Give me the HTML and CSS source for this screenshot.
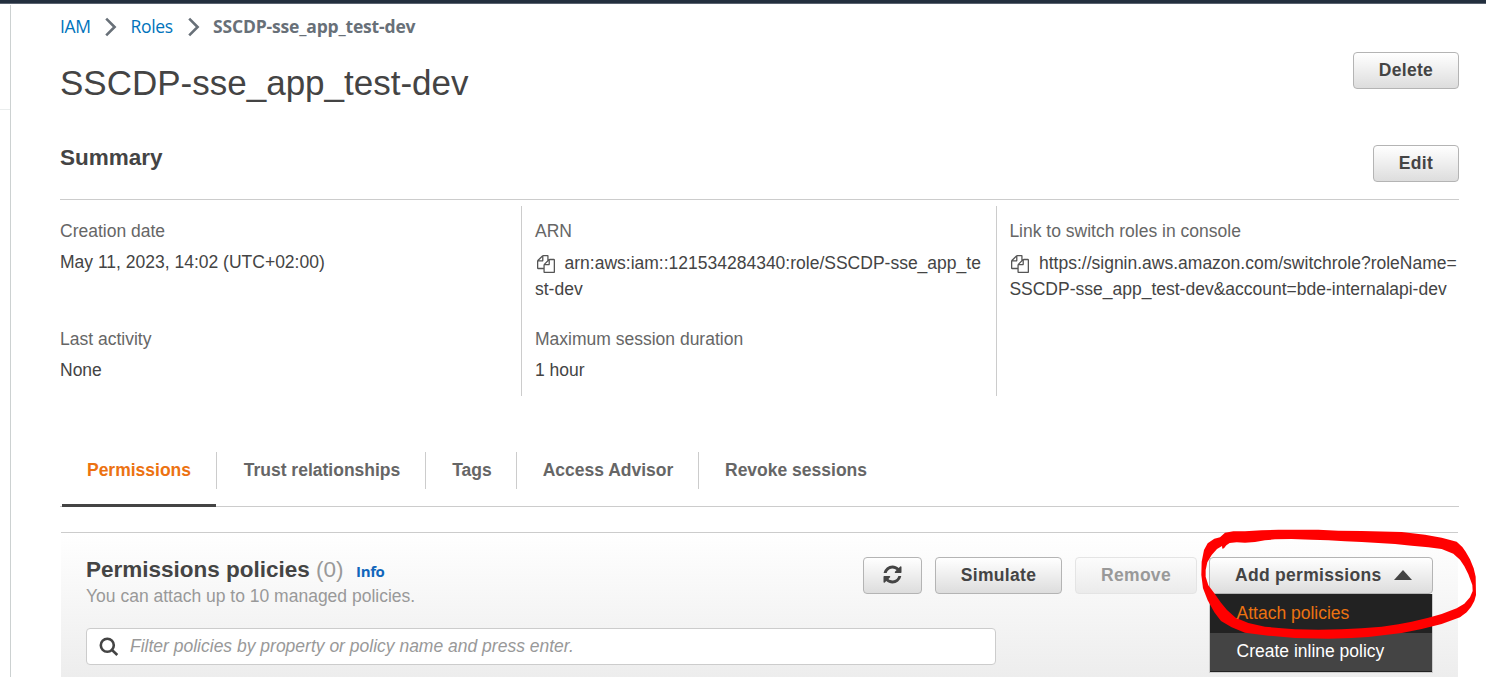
FILE: index.html
```html
<!DOCTYPE html>
<html lang="en">
<head>
<meta charset="utf-8">
<title>SSCDP-sse_app_test-dev</title>
<link rel="stylesheet" href="styles.css">
</head>
<body>
<svg class="defs" width="0" height="0" aria-hidden="true">
  <symbol id="copy" viewBox="0 0 1792 1792"><path d="M1696 384q40 0 68 28t28 68v1216q0 40-28 68t-68 28h-960q-40 0-68-28t-28-68v-288h-544q-40 0-68-28t-28-68v-672q0-40 20-88t48-76l408-408q28-28 76-48t88-20h416q40 0 68 28t28 68v328q68-40 128-40h416zm-544 213l-299 299h299v-299zm-640-384l-299 299h299v-299zm196 647l316-316v-416h-384v416q0 40-28 68t-68 28h-416v640h512v-256q0-40 20-88t48-76zm956 804v-1152h-384v416q0 40-28 68t-68 28h-416v640h896z"/></symbol>
</svg>
<header class="topbar"></header>
<div class="shell">
  <aside class="rail"><div class="rail-rule"></div></aside>
  <main class="content">
    <nav class="crumbs">
      <a>IAM</a>
      <svg class="chev" width="12" height="20" viewBox="0 0 12 20"><path d="M1.2 1.7 9.6 10 1.2 18.3"/></svg>
      <a>Roles</a>
      <svg class="chev" width="12" height="20" viewBox="0 0 12 20"><path d="M1.2 1.7 9.6 10 1.2 18.3"/></svg>
      <b>SSCDP-sse_app_test-dev</b>
    </nav>
    <div class="title-row">
      <h1>SSCDP-sse_app_test-dev</h1>
      <button class="btn delete">Delete</button>
    </div>
    <div class="summary-head">
      <h2>Summary</h2>
      <button class="btn edit">Edit</button>
    </div>
    <section class="summary">
      <div class="col">
        <div class="field"><div class="label">Creation date</div><div class="value">May 11, 2023, 14:02 (UTC+02:00)</div></div>
        <div class="field"><div class="label">Last activity</div><div class="value">None</div></div>
      </div>
      <div class="col">
        <div class="field"><div class="label">ARN</div><div class="value linked"><svg class="copy"><use href="#copy"/></svg>arn:aws:iam::121534284340:role/SSCDP-sse_app_te<br>st-dev</div></div>
        <div class="field"><div class="label">Maximum session duration</div><div class="value">1 hour</div></div>
      </div>
      <div class="col switch">
        <div class="field"><div class="label">Link to switch roles in console</div><div class="value linked"><svg class="copy"><use href="#copy"/></svg>https://signin.aws.amazon.com/switchrole?roleName=<br>SSCDP-sse_app_test-dev&amp;account=bde-internalapi-dev</div></div>
      </div>
    </section>
    <nav class="tabs">
      <a class="tab active">Permissions</a>
      <a class="tab trust">Trust relationships</a>
      <a class="tab tags">Tags</a>
      <a class="tab advisor">Access Advisor</a>
      <a class="tab revoke">Revoke sessions</a>
    </nav>
    <section class="panel">
      <div class="panel-head">
        <div class="heading">
          <h2>Permissions policies <span class="count">(0)</span><a class="info">Info</a></h2>
          <p>You can attach up to 10 managed policies.</p>
        </div>
        <div class="actions">
          <button class="btn refresh" aria-label="Refresh"><svg width="21" height="21" viewBox="0 0 1792 1792"><path d="M1639 1056q0 5-1 7-64 268-268 434.5t-478 166.500q-146 0-282.500-55t-243.500-157l-129 129q-19 19-45 19t-45-19-19-45v-448q0-26 19-45t45-19h448q26 0 45 19t19 45-19 45l-137 137q71 66 161 102t187 36q134 0 250-65t186-179q11-17 53-117 8-23 30-23h192q13 0 22.500 9.500t9.500 22.500zm25-800v448q0 26-19 45t-45 19h-448q-26 0-45-19t-19-45 19-45l138-138q-148-137-349-137-134 0-250 65t-186 179q-11 17-53 117-8 23-30 23h-199q-13 0-22.500-9.500t-9.500-22.500v-7q65-268 270-434.500t480-166.500q146 0 284 55.500t245 156.500l130-129q19-19 45-19t45 19 19 45z"/></svg></button>
          <button class="btn simulate">Simulate</button>
          <button class="btn remove" disabled>Remove</button>
          <div class="dropdown">
            <button class="btn add">Add permissions<svg width="18" height="10" viewBox="0 0 18 10"><path d="M0 10 9 0l9 10z"/></svg></button>
            <div class="menu">
              <a class="item hover"><span>Attach policies</span></a>
              <a class="item"><span>Create inline policy</span></a>
            </div>
            <svg class="marker" width="300" height="157" viewBox="0 0 900 471"><path transform="translate(27 15)" fill-rule="evenodd" d="M90 23L115 19L150 19L200 16L250 14L370 14L430 17L500 18L620 21L690 29L740 38L785 50L802 66L812 80L825 103L836 130L842 155L843 210L838 228L828 246L815 262L795 277L740 297L680 312L620 324L520 336L470 339L400 341L300 339L220 332L150 323L110 307L78 288L58 262L38 226L24 190L19 150L20 110L27 75L38 55L58 41L75 37ZM87 70L82 71L81 63L66 72L50 90L37 112L32 135L32 155L40 181L58 205L78 233L96 255L122 278L160 294L210 305L260 310L300 313L370 314L440 313L500 310L560 305L610 298L650 290L700 278L740 267L785 250L808 236L825 217L833 198L832 180L820 148L808 124L795 104L775 86L740 72L700 67L650 62L600 57L550 54L500 51L450 49L400 46L350 44L290 42L240 43L210 46L180 51L150 53L125 52L104 54L94 61Z"/></svg>
          </div>
        </div>
      </div>
      <div class="search">
        <svg width="20" height="20" viewBox="0 0 20 20"><circle cx="8.300" cy="8.200" r="6.500"/><path d="M13 13l5.300 5"/></svg>
        <span>Filter policies by property or policy name and press enter.</span>
      </div>
    </section>
  </main>
</div>
</body>
</html>
```
FILE: styles.css
```css
* { box-sizing: border-box; }
body {
  margin: 0;
  height: 677px;
  overflow: hidden;
  background: #fff;
  color: #444;
  font: 17.5px/26px "Liberation Sans", Arial, sans-serif;
  white-space: nowrap;
}
.defs { position: absolute; }
h1, h2, p { margin: 0; }
.topbar { height: 4px; background: #232f3e; border-bottom: 1px solid #5a6370; }
.shell { display: flex; height: 673px; }
.rail { width: 11px; margin-top: 1px; border-right: 1px solid #ccd1d1; }
.rail-rule { height: 105px; border-bottom: 1px solid #eaeded; }
.content { width: 1399px; margin-left: 49px; }

.crumbs {
  display: flex;
  align-items: center;
  height: 44px;
  padding-bottom: 1px;
  font: 17.5px/24px "Open Sans", sans-serif;
  color: #687078;
}
.crumbs a { width: 31px; letter-spacing: -0.3px; color: #0073bb; }
.crumbs a + svg + a { width: 43px; }
.crumbs b { font-weight: 700; letter-spacing: -0.17px; }
.chev { margin: 3px 13.500px 0 14px; fill: none; stroke: #687078; stroke-width: 2.6; }

.title-row { display: flex; justify-content: space-between; height: 90px; }
h1 { margin-top: 13px; font-size: 35px; line-height: 44px; font-weight: 400; }
.btn {
  height: 37px;
  padding: 0 0 2px;
  border: 1px solid #b4b4b4;
  border-radius: 4px;
  background: linear-gradient(#fff, #ddd);
  color: #444;
  font: bold 17.5px/26px "Liberation Sans", Arial, sans-serif;
  letter-spacing: 0.3px;
}
.delete { width: 106px; margin-top: 4px; }
.summary-head {
  display: flex;
  justify-content: space-between;
  height: 62px;
  border-bottom: 1px solid #ccc;
}
h2 { font-size: 22.5px; line-height: 30px; }
.summary-head h2 { margin-top: 5px; }
.edit { width: 86px; margin-top: 7px; }

.summary { display: grid; grid-template-columns: 461px 475px 463px; height: 190px; margin-top: 6px; }
.col { height: 190px; padding: 12px 0 0 13px; border-left: 1px solid #ccc; }
.col:first-child { padding-left: 0; border-left: 0; }
.col.switch { padding-left: 12.400px; }
.field { height: 108px; }
.field + .field { height: 57px; }
.label { height: 31px; color: #666; }
.linked { padding-top: 1px; }
.copy { width: 18px; height: 18px; margin: 0 9.500px 0 2px; vertical-align: -4px; fill: #555; }
.switch .copy { margin-left: 1.600px; margin-right: 10px; }

.tabs { display: flex; height: 55px; margin-top: 56px; padding-left: 2px; border-bottom: 1px solid #ccc; font-weight: 700; color: #666; }
.tab { height: 37px; padding: 5px 0 0 1px; text-align: center; border-left: 1px solid #ccc; }
.tab.active { width: 154px; height: 55px; padding-left: 0; border-left: 0; border-bottom: 3px solid #444; color: #ec7211; }
.trust { width: 209px; padding-left: 2px; }
.tags { width: 91px; padding-left: 2px; }
.advisor { width: 182px; }
.tab.revoke { padding-left: 26px; }

.panel {
  height: 145px;
  margin: 25px 1px 0;
  padding: 24px 25px 0;
  border-top: 1px solid #ccc;
  background: linear-gradient(#fff, #ededed);
}
.panel-head { display: flex; justify-content: space-between; height: 71px; }
.heading h2 { height: 26px; line-height: 25px; }
.count { font-weight: 400; color: #999; }
.info { margin-left: 12.500px; font: bold 15px/20px "Open Sans", sans-serif; letter-spacing: -0.4px; color: #1166bb; }
.heading p { color: #999; }
.actions { display: flex; }
.refresh { width: 59px; margin-right: 13px; }
.refresh svg { display: block; margin: 0 auto; fill: #444; }
.simulate { width: 127px; margin-right: 13px; }
.remove { width: 122px; margin-right: 12px; background: linear-gradient(#fcfcfc, #ebebeb); border-color: #e4e4e4; color: #999; }
.dropdown { position: relative; width: 224px; }
.add { width: 224px; padding-left: 5px; }
.add svg { margin-left: 12.500px; vertical-align: 1px; fill: #444; }
.menu {
  position: absolute;
  top: 37px;
  left: 0;
  width: 224px;
  border: 1px solid #ccc;
  border-top: 0;
  background: #444;
}
.item { display: block; height: 39px; padding: 5px 0 0 26.500px; border-bottom: 1px solid #222; color: #fff; }
.item.hover { height: 39px; padding-top: 6px; background: #222; color: #ec7211; }
.hover span { position: relative; z-index: 2; }
.marker { position: absolute; z-index: 1; left: -23px; top: -37px; fill: #f00; pointer-events: none; }

.search {
  display: flex;
  align-items: center;
  gap: 11px;
  width: 910px;
  height: 37px;
  padding-left: 12px;
  border: 1px solid #ccc;
  border-radius: 4px;
  background: #fff;
  color: #999;
  font-style: italic;
}
.search svg { fill: none; stroke: #444; stroke-width: 2.6; }
.search span { padding-bottom: 1px; }
```
